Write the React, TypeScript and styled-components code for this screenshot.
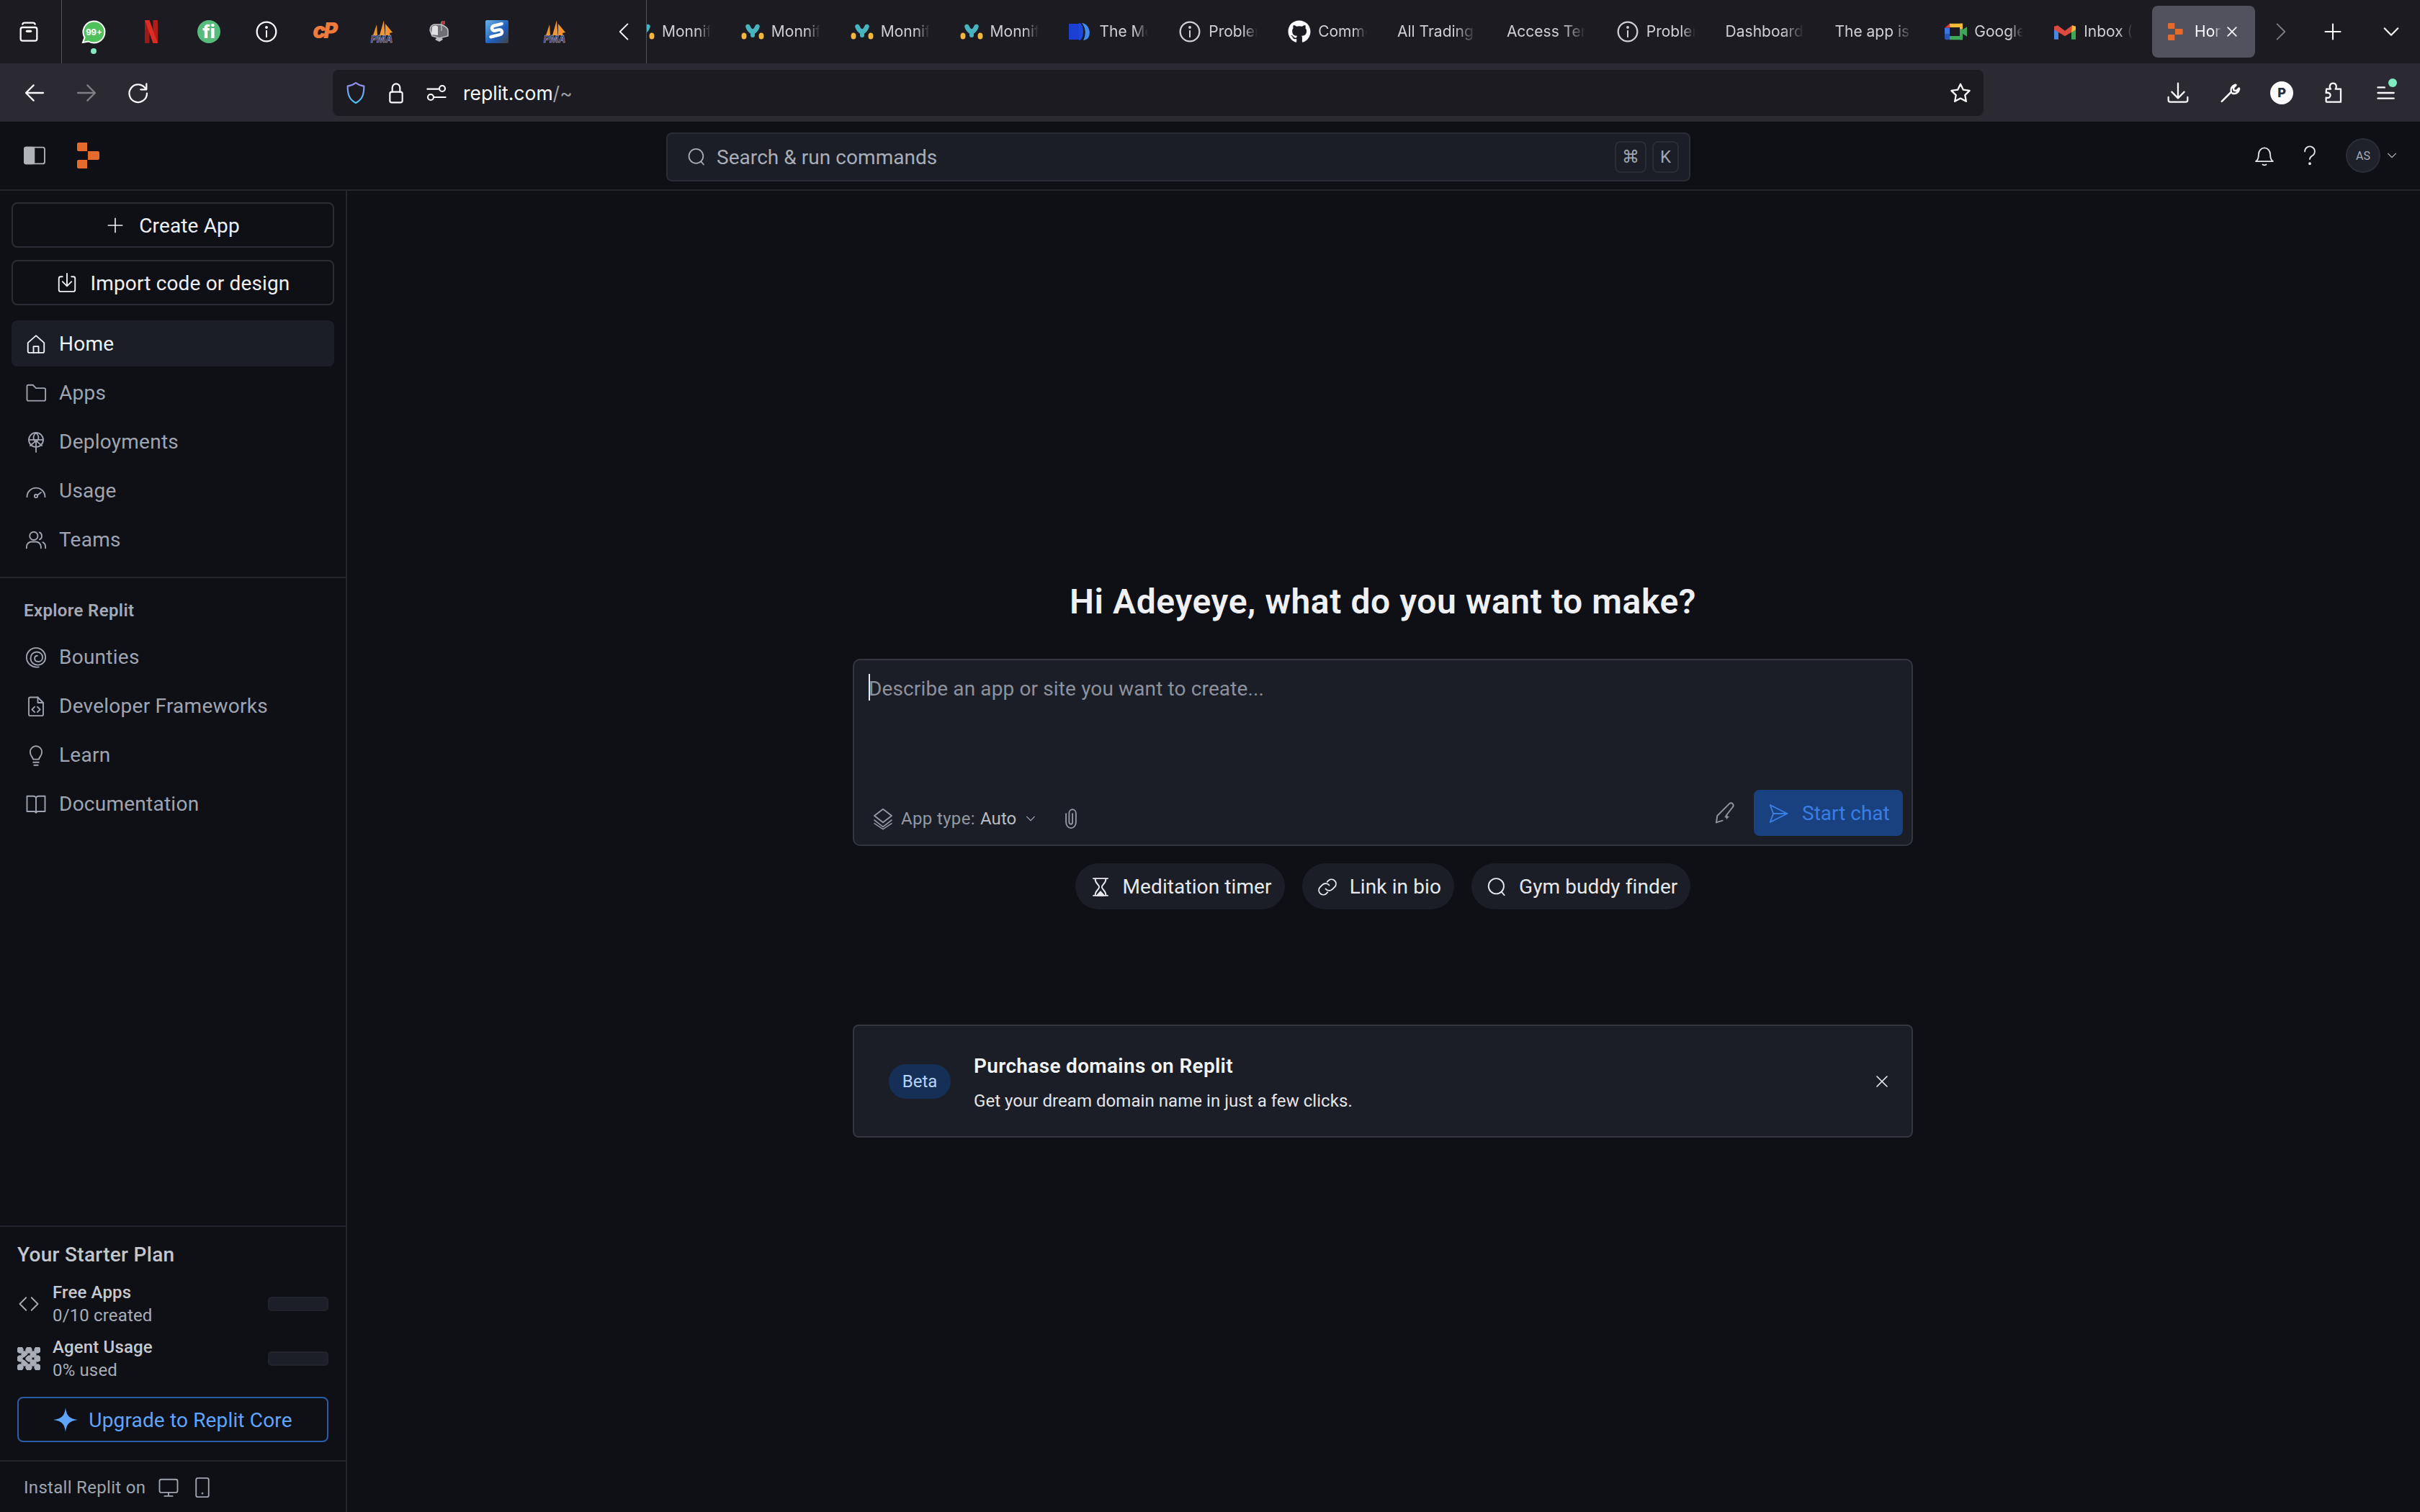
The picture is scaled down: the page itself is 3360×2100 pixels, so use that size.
import React from "react";
import styled, { createGlobalStyle } from "styled-components";
import { FaGithub } from "react-icons/fa";

const Global = createGlobalStyle`
  html, body { margin: 0; padding: 0; background: #0e1016; }
  * { box-sizing: border-box; }
  body { font-family: Roboto, "Noto Sans", sans-serif; color: #f5f7fa; }
`;

const Page = styled.div`
  width: 3360px; height: 2100px; display: flex; flex-direction: column; overflow: hidden; background: #0e1016;
`;

const Svg = styled.svg<{ $s: number; $c?: string; $w?: number }>`
  width: ${p => p.$s}px; height: ${p => p.$s}px; flex: none; fill: none;
  stroke: ${p => p.$c || "currentColor"}; stroke-width: ${p => p.$w || 1.5};
  stroke-linecap: round; stroke-linejoin: round; display: block;
`;

type IP = { s?: number; c?: string; w?: number };
const mk = (body: React.ReactNode, vb = "0 0 24 24") => ({ s = 30, c, w }: IP) => (
  <Svg $s={s} $c={c} $w={w} viewBox={vb}>{body}</Svg>
);

/* ---------- browser chrome ---------- */
const TabBar = styled.div`
  height: 88px; flex: none; display: flex; align-items: center; background: #1c1b22; color: #fbfbfe;
`;
const TabsButton = styled.div`
  width: 86px; height: 88px; flex: none; display: flex; align-items: center; justify-content: center;
  padding-right: 6px; border-right: 1px solid #52525e;
`;
const PinnedRow = styled.div`
  display: flex; padding-left: 4px; width: 724px; flex: none;
`;
const Pinned = styled.div`
  position: relative; width: 80px; height: 88px; flex: none; display: flex; align-items: center; justify-content: center;
`;
const AttentionDot = styled.span`
  position: absolute; left: 36px; top: 67px; width: 8px; height: 8px; border-radius: 50%; background: #80ebc0;
`;
const ScrollBack = styled.div`
  width: 88px; height: 88px; flex: none; display: flex; align-items: center; justify-content: center;
  padding-left: 26px; border-right: 1px solid #52525e; color: #fbfbfe;
`;
const ScrollForward = styled.div`
  width: 56px; height: 88px; flex: none; display: flex; align-items: center; justify-content: center; color: #7c7c85;
`;
const TabStrip = styled.div`
  width: 2240px; flex: none; overflow: hidden; height: 88px;
`;
const TabTrack = styled.div`
  display: flex; margin-left: -42px; height: 88px; align-items: center;
`;
const Tab = styled.div<{ $active?: boolean }>`
  flex: none; height: 72px; display: flex; align-items: center; border-radius: 8px;
  gap: ${p => (p.$active ? "15px" : "10px")};
  width: ${p => (p.$active ? "143px" : "151.86px")};
  padding: ${p => (p.$active ? "0 22px 0 20px" : "0 21px")};
  margin: ${p => (p.$active ? "0 3px 0 6px" : "0")};
  background: ${p => (p.$active ? "#52525e" : "transparent")};
  color: ${p => (p.$active ? "#fbfbfe" : "#cfcfd4")};
`;
const TabLabel = styled.span`
  flex: 1; min-width: 0; overflow: hidden; white-space: nowrap; font-family: Inter, sans-serif;
  font-size: 21px; line-height: 30px;
  -webkit-mask-image: linear-gradient(to right, #000 72%, transparent 100%);
  mask-image: linear-gradient(to right, #000 72%, transparent 100%);
`;
const TabRight = styled.div`
  display: flex; align-items: center; flex: none;
`;
const TabTool = styled.div<{ $w: number }>`
  width: ${p => p.$w}px; height: 72px; display: flex; align-items: center; justify-content: center; color: #fbfbfe;
`;

const NavBar = styled.div`
  height: 81px; flex: none; display: flex; align-items: center; padding: 0 12px; background: #2b2a33; color: #fbfbfe;
`;
const NavBtn = styled.div<{ $dim?: boolean }>`
  position: relative; width: 72px; height: 64px; flex: none; display: flex; align-items: center; justify-content: center;
  color: ${p => (p.$dim ? "#807f85" : "#fbfbfe")};
`;
const UrlBar = styled.div`
  width: 2292px; height: 64px; margin-left: 234px; flex: none; display: flex; align-items: center;
  background: #1c1b22; border-radius: 8px; padding: 0 16px;
`;
const UrlIcons = styled.div`
  display: flex; align-items: center; gap: 24px; color: #fbfbfe;
`;
const UrlText = styled.span`
  margin-left: 21px; font-family: Inter, sans-serif; font-size: 26.5px; color: #fbfbfe;
`;
const UrlRest = styled.span`
  color: #9d9da3;
`;
const UrlEnd = styled.div`
  margin-left: auto; display: flex; align-items: center;
`;
const NavRight = styled.div`
  margin-left: auto; display: flex; align-items: center;
`;
const UpdateDot = styled.span`
  position: absolute; right: 20px; top: 12px; width: 12px; height: 12px; border-radius: 50%; background: #80ebc0;
`;
const ProfileBadge = styled.span`
  width: 32px; height: 32px; border-radius: 50%; background: #fbfbfe; color: #2b2a33;
  display: flex; align-items: center; justify-content: center; font-family: Inter, sans-serif; font-weight: 800; font-size: 18px;
`;

/* ---------- app header ---------- */
const AppHeader = styled.header`
  height: 96px; flex: none; display: flex; align-items: center; border-bottom: 2px solid #23262e; background: #0e1016;
`;
const HeaderLeft = styled.div`
  width: 925px; flex: none; display: flex; align-items: center; gap: 40px; padding-left: 32px; color: #b0b3ba;
`;
const SearchBox = styled.div`
  width: 1422px; height: 68px; margin-top: 4px; flex: none; display: flex; align-items: center; background: #1b1e26;
  border: 2px solid #2a2d36; border-radius: 8px; padding: 0 14px 0 26px; color: #a9adb6;
`;
const SearchText = styled.span`
  margin-left: 14px; padding-top: 1px; font-size: 28px; letter-spacing: .05px; flex: 1;
`;
const Kbd = styled.span<{ $mono?: boolean }>`
  height: 44px; min-width: 34px; padding: 0 ${p => (p.$mono ? "8px" : "9px")}; margin-left: 8px; border: 2px solid #2a2d36; border-radius: 8px;
  display: flex; align-items: center; justify-content: center; font-size: 24px; color: #a2a6af;
  font-family: Roboto, "DejaVu Sans", sans-serif;
`;
const HeaderRight = styled.div`
  flex: 1; display: flex; align-items: center; justify-content: flex-end; padding-right: 31px; color: #e2e4e8;
`;
const HeadIcon = styled.div<{ $mr: number }>`
  display: flex; margin-right: ${p => p.$mr}px;
`;
const Avatar = styled.div`
  width: 48px; height: 48px; border-radius: 50%; background: #1f222a; border: 2px solid #2a2d36;
  display: flex; align-items: center; justify-content: center; font-size: 16px; color: #a9adb6; margin-right: 8px;
`;

/* ---------- layout ---------- */
const Body = styled.div`
  flex: 1; min-height: 0; display: flex;
`;
const Sidebar = styled.aside`
  width: 482px; flex: none; display: flex; flex-direction: column; border-right: 2px solid #23262e;
`;
const TopGroup = styled.div`
  padding: 16px 16px 20px; display: flex; flex-direction: column; border-bottom: 2px solid #23262e;
`;
const OutlineBtn = styled.div<{ $gap?: number }>`
  height: 63px; display: flex; align-items: center; justify-content: center; gap: ${p => p.$gap || 20}px;
  border: 2px solid #2a2d36; border-radius: 8px; font-size: 28px; letter-spacing: .15px; color: #eef0f3; margin-bottom: 17px;
`;
const OutlineLabel = styled.span`
  padding-top: 2px;
`;
const NavList = styled.nav`
  display: flex; flex-direction: column; gap: 4px; margin-top: 4px;
`;
const NavItem = styled.div<{ $active?: boolean }>`
  height: 64px; display: flex; align-items: center; gap: 17px; padding: 1px 19px 0; border-radius: 8px; font-size: 28px; letter-spacing: .25px;
  background: ${p => (p.$active ? "#1b1e26" : "transparent")};
  color: ${p => (p.$active ? "#f0f2f5" : "#9fa4b0")};
`;
const ExploreGroup = styled.div`
  padding: 30px 16px 0; display: flex; flex-direction: column;
`;
const SectionLabel = styled.div`
  font-size: 24px; font-weight: 600; line-height: 30px; letter-spacing: .35px; padding-left: 17px; margin-bottom: 13px; color: #a4a9b4;
`;
const PlanGroup = styled.div`
  margin-top: auto; border-top: 2px solid #23262e; padding: 22px 24px 25px; display: flex; flex-direction: column;
`;
const PlanTitle = styled.div`
  font-size: 28px; font-weight: 500; line-height: 34px; letter-spacing: .3px; color: #c3c6cd; margin-bottom: 19px;
`;
const StatRow = styled.div`
  display: flex; align-items: center; height: 64px; margin-bottom: 12px; color: #a9adb6;
`;
const StatIcon = styled.div`
  width: 32px; flex: none; display: flex; justify-content: center; margin-right: 17px;
`;
const StatText = styled.div`
  flex: 1; font-size: 24px; line-height: 32px; letter-spacing: .15px;
`;
const StatName = styled.div`
  font-weight: 500; color: #c6c9cf;
`;
const StatBar = styled.div`
  width: 84px; height: 20px; border-radius: 5px; background: #1c1f27; border: 2px solid #20232b;
`;
const UpgradeBtn = styled.div`
  height: 63px; margin-top: 9px; display: flex; align-items: center; justify-content: center; gap: 15px;
  border: 2px solid #2a5da6; border-radius: 8px; padding-top: 1px; font-size: 28px; letter-spacing: .15px; color: #5fa5f9;
`;
const InstallRow = styled.div`
  height: 72px; flex: none; border-top: 2px solid #23262e; display: flex; align-items: center; padding: 1px 0 0 33px;
  font-size: 24px; letter-spacing: .3px; color: #9fa4b0;
`;
const Spaced = styled.span<{ $ml: number }>`
  display: flex; margin-left: ${p => p.$ml}px;
`;

const Main = styled.main`
  flex: 1; min-width: 0; display: flex; flex-direction: column; align-items: center; padding-right: 2px;
`;
const Heading = styled.h1`
  margin: 541px 0 49px; font-size: 48px; line-height: 60px; font-weight: 600; letter-spacing: .58px; color: #eef0f4;
`;
const Composer = styled.div`
  width: 1472px; height: 260px; flex: none; display: flex; flex-direction: column; justify-content: space-between;
  background: #1b1e26; border: 2px solid #33363f; border-radius: 10px; padding: 19px 12px 12px 20px;
`;
const PromptLine = styled.div`
  display: flex; align-items: center; height: 37px; font-size: 28px; letter-spacing: .13px; color: #8d919d;
`;
const PromptText = styled.span`
  padding-top: 3px;
`;
const Caret = styled.span`
  width: 2px; height: 37px; background: #e8eaed; flex: none; margin-right: -2px;
`;
const ComposerFoot = styled.div`
  display: flex; align-items: flex-end; justify-content: space-between;
`;
const FootLeft = styled.div`
  height: 48px; display: flex; align-items: center; padding-left: 4px; font-size: 24px; letter-spacing: .35px; color: #9298a4;
`;
const AutoValue = styled.span`
  margin-left: 7px; letter-spacing: .1px; color: #b9bcc4;
`;
const FootRight = styled.div`
  display: flex; align-items: center; gap: 24px; color: #8f939c;
`;
const StartBtn = styled.div`
  width: 207px; height: 64px; display: flex; align-items: center; gap: 18px; padding: 1px 0 0 19px; border-radius: 8px;
  background: #19417f; color: #3a7de3; font-size: 28px;
`;
const ChipRow = styled.div`
  display: flex; gap: 24px; margin-top: 24px;
`;
const Chip = styled.div`
  height: 64px; display: flex; align-items: center; gap: 16px; padding: 1px 18px 0 20px; border-radius: 32px;
  background: #1b1e26; color: #e6e8ec; font-size: 28px; letter-spacing: .1px;
`;
const Banner = styled.div`
  width: 1472px; height: 157px; margin-top: 160px; flex: none; display: flex; align-items: center;
  background: #1b1e26; border: 2px solid #33363f; border-radius: 8px; padding: 0 29px 0 48px;
`;
const BetaPill = styled.span`
  width: 86px; height: 48px; border-radius: 24px; background: #152f57; color: #b8d4f8;
  display: flex; align-items: center; justify-content: center; font-size: 24px; flex: none;
`;
const BannerText = styled.div`
  margin-left: 32px; margin-top: 6px; display: flex; flex-direction: column; gap: 12px;
`;
const BannerTitle = styled.div`
  font-size: 28px; line-height: 36px; font-weight: 600; letter-spacing: .33px; color: #f2f4f7;
`;
const BannerSub = styled.div`
  font-size: 24px; line-height: 36px; letter-spacing: .05px; color: #e3e5e9;
`;
const BannerClose = styled.div`
  margin-left: auto; color: #eef0f3; display: flex;
`;

/* ---------- icons ---------- */
const TabsIcon = mk(<><rect x="3.5" y="7.5" width="17" height="14" rx="2" /><path d="M5.5 4.2c.3-1 .9-1.5 2-1.5h9c1.1 0 1.7.5 2 1.5" /><path d="M10 11.5h4" strokeWidth="2.4" /></>);
const ChevronL = mk(<path d="M15.5 3.5 7 12l8.5 8.5" />);
const ChevronR = mk(<path d="M8.5 3.5 17 12l-8.5 8.5" />);
const PlusI = mk(<path d="M12 3v18M3 12h18" />);
const ChevronD = mk(<path d="M4 8l8 8 8-8" />);
const CloseI = mk(<path d="M5 5l14 14M19 5 5 19" />);
const BackI = mk(<path d="M21 12H3.5M11 4l-8 8 8 8" />);
const FwdI = mk(<path d="M3 12h17.5M13 4l8 8-8 8" />);
const ReloadI = mk(<><path d="M19.5 7.5A9.2 9.2 0 1 0 21 12.5" /><path d="M20.5 2.5v6h-6" /></>);
const LockI = mk(<><rect x="5.5" y="11" width="13" height="11" rx="2" /><path d="M8 11V6.5a4 4 0 0 1 8 0V11" /></>);
const TuneI = mk(<><path d="M2.500 8h11.500M10 16.500h11.500" /><circle cx="18" cy="7.500" r="3" /><circle cx="6" cy="16.500" r="3" /></>);
const StarI = mk(<path d="m12 2.8 2.9 6 6.6.9-4.8 4.6 1.2 6.6-5.9-3.2-5.9 3.2 1.2-6.6L2.5 9.7l6.6-.9z" />);
const DownloadI = mk(<><path d="M12 2v15M5.5 11l6.5 6.5 6.5-6.5" /><path d="M2 16.5v3a2 2 0 0 0 2 2h16a2 2 0 0 0 2-2v-3" /></>);
const WrenchI = mk(<path d="m3 21.5 10.5-10.5c-1-3.3.6-7 4.5-8l.9.3-3 3.2.6 2.7 2.7.6 3-3 .3 1c-.8 4-4.4 5.8-7.8 4.6" strokeWidth="2" />);
const PuzzleI = mk(<path d="M4.5 8h4.5c-1.8-2-1-6 2.5-6s4.2 4 2.5 6h5.5v13.5H5a.8.8 0 0 1-.8-.8V17c3 .8 4.5-.8 4.5-2.5S7.2 11.300 4.200 12z" />);
const MenuI = mk(<path d="M3 5.500h8M3 12h19M3 18.500h19" strokeWidth="2" />);
const ShieldGrad = ({ s = 32 }: { s?: number }) => (
  <Svg $s={s} viewBox="0 0 24 24" $c="url(#shieldG)" $w={1.6}>
    <defs>
      <linearGradient id="shieldG" x1="0" y1="0" x2="0" y2="1">
        <stop offset="0" stopColor="#9a8cf5" /><stop offset="1" stopColor="#4cc4f5" />
      </linearGradient>
    </defs>
    <path d="M12 1.500c2.500 2 5 3 8.500 3.500 0 7.500-1 13.500-8.500 17.500C4.500 18.500 3.500 12.500 3.500 5 7 4.500 9.500 3.500 12 1.500z" />
  </Svg>
);
const InfoI = mk(<><circle cx="12" cy="12" r="10" strokeWidth="1.7" /><path d="M12 11v6.500" strokeWidth="1.500" /><circle cx="12" cy="7.500" r=".7" fill="currentColor" /></>);
const PanelI = ({ s = 32 }: { s?: number }) => (
  <Svg $s={s} viewBox="0 0 24 24" $w={1.4}>
    <rect x="1.500" y="3.500" width="21" height="17" rx="2" />
    <rect x="1.500" y="3.500" width="10" height="17" rx="1.500" fill="currentColor" />
  </Svg>
);
const SearchI = mk(<><circle cx="11.500" cy="11" r="8.500" /><path d="M17.500 17.500 20.500 21" /></>);
const BellI = mk(<><path d="M2.500 18.500c2.500-1.500 3-4 3-7.500a6.500 7.500 0 0 1 13 0c0 3.500.5 6 3 7.500z" /><path d="M10 22c1.200.8 2.800.8 4 0" /></>);
const HelpI = mk(<><path d="M6.500 7.500a5.500 5.500 0 1 1 8.300 4.700c-1.800 1.100-2.800 2-2.800 3.800" /><circle cx="12" cy="21" r=".8" fill="currentColor" /></>);
const ImportI = mk(<><path d="M7 5H5a2 2 0 0 0-2 2v12.500a2 2 0 0 0 2 2h14a2 2 0 0 0 2-2V7a2 2 0 0 0-2-2h-2" /><path d="M12 1.500v13.500M7 10.500l5 5 5-5" /></>);
const HomeI = mk(<><path d="M3 10.500 12 2.500l9 8V20a1.500 1.500 0 0 1-1.500 1.500h-15A1.500 1.500 0 0 1 3 20z" /><path d="M9.200 21.500V14.500h5.600v7" /></>);
const FolderI = mk(<path d="M2 4.500a1.500 1.500 0 0 1 1.500-1.500h5l3.500 3.500h9A1.500 1.500 0 0 1 22.500 8v11a1.500 1.500 0 0 1-1.500 1.500H3.500A1.500 1.500 0 0 1 2 19z" />);
const DeployI = mk(<><circle cx="12" cy="9.500" r="8" /><path d="M4 9.500h16M12 1.500c-3.500 3-3.500 7 -1.500 9M12 1.500c3.500 3 3.500 7 1.500 9" /><path d="M12 23V11M5.500 16l6.500-5.500 6.500 5.500" /></>);
const UsageI = mk(<><path d="M2 18.500a10 10 0 0 1 20 0" /><circle cx="12" cy="17.500" r="1.700" /><path d="m13.500 16.500 4-3" /></>);
const TeamsI = mk(<><circle cx="9.500" cy="7.500" r="4.500" /><path d="M1.500 21v-1.500a5.500 5.500 0 0 1 5.500-5.500h5a5.500 5.500 0 0 1 5.500 5.500V21" /><path d="M16 3.500a4.500 4.500 0 0 1 0 8M19.500 14.500c1.800.9 3 2.700 3 5V21" /></>);
const SpiralI = mk(<path d="M15 22.700C7.500 24 1.500 18.500 1.500 12a10.500 10.500 0 0 1 21 0c0 5-3.800 8.500-8.500 8.500-4.500 0-8-3.200-8-7.500s3-7 6.800-7 6.500 2.500 6.500 5.800-2.300 5-4.800 5-4-1.600-4-3.600 1.400-3 3-3" />);
const FileCodeI = mk(<><path d="M4 3.500A1.500 1.500 0 0 1 5.500 2H14l6 6v13a1.500 1.500 0 0 1-1.500 1.500h-13A1.500 1.500 0 0 1 4 21z" /><path d="M14 2v6h6M10.500 12.500 7.500 15.500l3 3M13.500 12.500l3 3-3 3" /></>);
const BulbI = mk(<path d="M8.800 16.500c-.3-2.600-3.300-3.700-3.300-8.200a6.500 6.500 0 0 1 13 0c0 4.500-3 5.600-3.300 8.200zM9 19.800h6M9.800 23h4.400" />);
const BookI = mk(<path d="M2 3h7c1.500 0 3 1 3 2.500C12 4 13.500 3 15 3h7v17h-8.500L12 21.500 10.500 20H2zM12 5.500v16" />);
const CodeI = mk(<path d="M9 5 2 12l7 7M15 5l7 7-7 7" />);
const Sparkle = ({ s = 34, c = "#5fa5f9" }: { s?: number; c?: string }) => (
  <Svg $s={s} viewBox="0 0 24 24" $c="none"><path fill={c} d="M12 0c.9 7.600 3.400 10.900 12 12-8.600 1.100-11.100 4.400-12 12-.9-7.600-3.400-10.900-12-12C8.600 10.900 11.100 7.600 12 0z" /></Svg>
);
const AgentI = ({ s = 32 }: { s?: number }) => (
  <Svg $s={s} viewBox="0 0 32 32" $c="#a9adb6" $w={0}>
    <g fill="#a9adb6">
      {[4, 16, 28].map(x => [4, 16, 28].map(y => <circle key={`${x}${y}`} cx={x} cy={y} r="4" />))}
      <circle cx="10" cy="10" r="4" /><circle cx="22" cy="10" r="4" /><circle cx="10" cy="22" r="4" /><circle cx="22" cy="22" r="4" />
    </g>
    <path d="M8 16c5-2 5-6 9-6M8 16c5 2 5 6 9 6" stroke="#0e1016" strokeWidth="1.500" fill="none" />
  </Svg>
);
const MonitorI = mk(<><rect x="2" y="3" width="20" height="14.500" rx="2" /><path d="M12 17.500V21.500M7.500 21.500h9" /></>);
const PhoneI = mk(<><rect x="5" y="1.500" width="14" height="21" rx="2" /><circle cx="12" cy="18.500" r=".4" fill="currentColor" /></>);
const LayersI = mk(<><path d="m12 2 9 7-9 7-9-7z" /><path d="m3 13.500 9 7 9-7M3 17l9 6 9-6" strokeWidth="1.200" /></>);
const ClipI = mk(<path d="M6.500 6.500v9.500a5.500 6.500 0 0 0 11 0V6a3.800 4.200 0 0 0-7.600 0v10a1.900 2.200 0 0 0 3.800 0V6.500" />);
const PenI = mk(<><path d="M3 22 4 15 16.500 2.500c1-1 2.500-1 3.500 0s1 2.500 0 3.500l-7 9" /><path d="M3 22l6.500-2" /><path d="M14 13c.3 2.200 1 3 3 3.300-2 .3-2.700 1-3 3.200-.3-2.200-1-2.900-3-3.200 2-.3 2.700-1.100 3-3.300z" fill="currentColor" stroke="none" /></>);
const SendI = mk(<path d="M3 2.500 22 12 3 21.500 6.500 12zM6.500 12H22" />);
const HourglassI = mk(<><path d="M4 2.500h16M4 21.500h16M6 2.500c0 6 4.500 6.500 4.500 9.500S6 15.500 6 21.500M18 2.500c0 6-4.500 6.500-4.500 9.500s4.500 3.500 4.500 9.500" /><path d="M8 21.500l4-4.500 4 4.500z" fill="currentColor" /></>);
const LinkI = mk(<><path d="M10 14a5 5 0 0 0 7.500.5l3-3a5 5 0 0 0-7-7l-1.800 1.800" /><path d="M14 10a5 5 0 0 0-7.500-.5l-3 3a5 5 0 0 0 7 7l1.800-1.800" /></>);

/* ---------- favicons ---------- */
const Fav = styled.svg`
  width: 32px; height: 32px; flex: none; display: block; overflow: visible;
`;
const WhatsApp = () => (
  <Fav viewBox="0 0 32 32">
    <path d="M1 31l2.500-7A15 15 0 1 1 9 29.500z" fill="#4fc15c" stroke="#fff" strokeWidth="2" />
    <text x="16.500" y="20.500" textAnchor="middle" fontSize="11.500" fontWeight="700" fill="#fff" fontFamily="Inter, sans-serif">99+</text>
  </Fav>
);
const Netflix = () => (
  <Fav viewBox="0 0 32 32">
    <path d="M7 0h6.500v32L7 32z" fill="#9c1a17" /><path d="M18.500 0H25v32h-6.500z" fill="#b01e1a" />
    <path d="M7 0h6.500L25 32h-6.500z" fill="#dc2c24" />
  </Fav>
);
const Fiverr = () => (
  <Fav viewBox="0 0 32 32">
    <circle cx="16" cy="16" r="16" fill="#56bb7c" />
    <text x="16" y="25" textAnchor="middle" fontSize="25" fontWeight="800" fill="#fff" fontFamily="Inter, sans-serif">fi</text>
  </Fav>
);
const Cpanel = () => (
  <Fav viewBox="0 0 32 32">
    <text x="16" y="25" textAnchor="middle" fontSize="30" fontWeight="900" fontStyle="italic" letterSpacing="-3" fill="#ee7a3b" fontFamily="Inter, sans-serif">cP</text>
  </Fav>
);
const Pma = () => (
  <Fav viewBox="0 0 32 32">
    <path d="M4 21 9 6l1 15zM13 21 19 0l1.500 21zM21 21V5l10 12-4 1 .5 3z" fill="#f0952f" />
    <text x="16" y="31" textAnchor="middle" fontSize="13" fontWeight="800" fontStyle="italic" fill="#3e3d6e" stroke="#c7c8dc" strokeWidth=".4" fontFamily="Inter, sans-serif">PMA</text>
  </Fav>
);
const Mailbox = () => (
  <Fav viewBox="0 0 32 32">
    <path d="M3 14c0-5 3-8 7-8h9c4 2 9 5 9 8v8l-12 3-10-3z" fill="#6f6f74" stroke="#c6c6c8" strokeWidth="1.500" />
    <path d="M6 9c3-2 6-2 8 0v12l-9-1z" fill="#e0e0e2" />
    <path d="M13 24h6l2 3-5 3-6-3z" fill="#bdbdc0" /><path d="M19 15V2" stroke="#d8d8da" strokeWidth="1" /><path d="M19 1h5v5h-5z" fill="#b23c3c" />
  </Fav>
);
const Spike = () => (
  <Fav viewBox="0 0 32 32">
    <defs><linearGradient id="spikeG" x1="0" y1="0" x2="1" y2="1"><stop offset="0" stopColor="#6bb3e6" /><stop offset=".6" stopColor="#1c5cb8" /><stop offset="1" stopColor="#444" /></linearGradient></defs>
    <rect width="32" height="32" rx="2" fill="url(#spikeG)" />
    <path d="M25 7H14c-5 0-5 7 0 7h5c5 0 5 7 0 7H6" fill="none" stroke="#fff" strokeWidth="4.500" strokeLinecap="round" transform="rotate(-14 16 16)" />
  </Fav>
);
const Monnify = () => (
  <Fav viewBox="0 0 32 32">
    <path d="M9.500 9c1 4 3.500 6 6.500 8 3-2 5.500-4 6.500-8" fill="none" stroke="#47b3bf" strokeWidth="6.500" strokeLinecap="round" />
    <path d="M16 15v6" stroke="#47b3bf" strokeWidth="6" strokeLinecap="round" />
    <ellipse cx="4" cy="22" rx="3.500" ry="4.500" fill="#f3b73f" /><ellipse cx="28" cy="22" rx="3.500" ry="4.500" fill="#f3b73f" />
  </Fav>
);
const Mono = () => (
  <Fav viewBox="0 0 32 32">
    <path d="M0 5h14v22H0z" fill="#1b3fd1" /><path d="M14 4c8 0 8 24 0 24z" fill="#1d46dc" />
    <path d="M18 4c12 .5 16 23 2 24 4-7 4-17-2-24z" fill="#3f8bf5" />
  </Fav>
);
const Meet = () => (
  <Fav viewBox="0 0 32 32">
    <g transform="translate(0 4) scale(1 .75)">
      <path d="M8 1h18v7H8z" fill="#f4bb37" /><path d="M8 1 1 9h7z" fill="#d93a2e" />
      <path d="M1 9h7v12H1z" fill="#3a74e0" /><path d="M1 21h7v10H4a3 3 0 0 1-3-3z" fill="#2a56b8" />
      <path d="M8 24h18v7H8z" fill="#3fa75a" /><path d="M22 1h4v30h-4z" fill="#3fa75a" /><path d="M22 1h4v10h-4z" fill="#f4bb37" />
      <path d="M24 14l8-7v18l-8-7z" fill="#3fa75a" />
    </g>
  </Fav>
);
const Gmail = () => (
  <Fav viewBox="0 0 32 32">
    <g transform="translate(0 5) scale(1 .75)">
      <path d="M1 5v24h6V13z" fill="#4a86e8" /><path d="M31 5v24h-6V13z" fill="#3fa75a" />
      <path d="M1 5v6l15 12 15-12V5l-5-2-10 10L6 3z" fill="#dd4b3e" /><path d="M26 3l5 2v6l-6 5z" fill="#f4bb37" />
    </g>
  </Fav>
);
const ReplitMark = ({ s = 32 }: { s?: number }) => (
  <Svg $s={s} viewBox="0 0 32 36" $c="none">
    <path fill="#e56b2d" d="M1 2a2 2 0 0 1 2-2h12v12H3a2 2 0 0 1-2-2zM16 12h14a2 2 0 0 1 2 2v8a2 2 0 0 1-2 2H16zM3 24h12v12H3a2 2 0 0 1-2-2v-8a2 2 0 0 1 2-2z" />
  </Svg>
);

const pinned: React.ReactNode[] = [
  <><WhatsApp /><AttentionDot /></>, <Netflix />, <Fiverr />, <InfoI s={32} />, <Cpanel />, <Pma />, <Mailbox />, <Spike />, <Pma />,
];

const tabs: { icon?: React.ReactNode; label: string }[] = [
  { icon: <Monnify />, label: "Monnify" },
  { icon: <Monnify />, label: "Monnify" },
  { icon: <Monnify />, label: "Monnify" },
  { icon: <Monnify />, label: "Monnify" },
  { icon: <Mono />, label: "The Mono" },
  { icon: <InfoI s={32} />, label: "Problem" },
  { icon: <FaGithub size={32} color="#fbfbfe" />, label: "Comments" },
  { label: "All Trading Pairs" },
  { label: "Access Terminal" },
  { icon: <InfoI s={32} />, label: "Problem" },
  { label: "Dashboard" },
  { label: "The app is running" },
  { icon: <Meet />, label: "Google Meet" },
  { icon: <Gmail />, label: "Inbox (42)" },
];

const primary = [
  { icon: <HomeI />, label: "Home", active: true },
  { icon: <FolderI />, label: "Apps" },
  { icon: <DeployI />, label: "Deployments" },
  { icon: <UsageI />, label: "Usage" },
  { icon: <TeamsI />, label: "Teams" },
];
const explore = [
  { icon: <SpiralI />, label: "Bounties" },
  { icon: <FileCodeI />, label: "Developer Frameworks" },
  { icon: <BulbI />, label: "Learn" },
  { icon: <BookI />, label: "Documentation" },
];

export default function App() {
  return (
    <Page>
      <Global />
      <TabBar>
        <TabsButton><TabsIcon s={32} w={1.7} /></TabsButton>
        <PinnedRow>
          {pinned.map((p, i) => <Pinned key={i}>{p}</Pinned>)}
        </PinnedRow>
        <ScrollBack><ChevronL s={30} /></ScrollBack>
        <TabStrip>
          <TabTrack>
            {tabs.map((t, i) => (
              <Tab key={i}>{t.icon}<TabLabel>{t.label}</TabLabel></Tab>
            ))}
            <Tab $active>
              <ReplitMark s={24} />
              <TabLabel>Home</TabLabel>
              <Spaced $ml={-10}><CloseI s={20} c="#fbfbfe" w={2} /></Spaced>
            </Tab>
          </TabTrack>
        </TabStrip>
        <TabRight>
          <ScrollForward><ChevronR s={30} /></ScrollForward>
          <TabTool $w={90}><PlusI s={28} w={1.8} /></TabTool>
          <TabTool $w={72}><ChevronD s={28} w={1.8} /></TabTool>
        </TabRight>
      </TabBar>

      <NavBar>
        <NavBtn><BackI s={32} w={1.7} /></NavBtn>
        <NavBtn $dim><FwdI s={32} w={1.7} /></NavBtn>
        <NavBtn><ReloadI s={32} w={1.7} /></NavBtn>
        <UrlBar>
          <UrlIcons>
            <ShieldGrad s={32} />
            <LockI s={32} w={1.6} />
            <TuneI s={32} w={1.6} />
          </UrlIcons>
          <UrlText>replit.com<UrlRest>/~</UrlRest></UrlText>
          <UrlEnd><StarI s={32} c="#fbfbfe" w={1.7} /></UrlEnd>
        </UrlBar>
        <NavRight>
          <NavBtn><DownloadI s={32} w={1.7} /></NavBtn>
          <NavBtn><WrenchI s={30} /></NavBtn>
          <NavBtn><ProfileBadge>P</ProfileBadge></NavBtn>
          <NavBtn><PuzzleI s={32} w={1.7} /></NavBtn>
          <NavBtn><MenuI s={28} /><UpdateDot /></NavBtn>
        </NavRight>
      </NavBar>

      <AppHeader>
        <HeaderLeft>
          <PanelI s={32} />
          <ReplitMark s={36} />
        </HeaderLeft>
        <SearchBox>
          <SearchI s={28} />
          <SearchText>Search &amp; run commands</SearchText>
          <Kbd $mono>⌘</Kbd>
          <Kbd>K</Kbd>
        </SearchBox>
        <HeaderRight>
          <HeadIcon $mr={33}><BellI s={30} /></HeadIcon>
          <HeadIcon $mr={35}><HelpI s={30} /></HeadIcon>
          <Avatar>AS</Avatar>
          <ChevronD s={16} c="#9fa4b0" w={2} />
        </HeaderRight>
      </AppHeader>

      <Body>
        <Sidebar>
          <TopGroup>
            <OutlineBtn><PlusI s={26} /><OutlineLabel>Create App</OutlineLabel></OutlineBtn>
            <OutlineBtn $gap={18}><ImportI s={30} /><OutlineLabel>Import code or design</OutlineLabel></OutlineBtn>
            <NavList>
              {primary.map(n => <NavItem key={n.label} $active={n.active}>{n.icon}{n.label}</NavItem>)}
            </NavList>
          </TopGroup>
          <ExploreGroup>
            <SectionLabel>Explore Replit</SectionLabel>
            <NavList>
              {explore.map(n => <NavItem key={n.label}>{n.icon}{n.label}</NavItem>)}
            </NavList>
          </ExploreGroup>
          <PlanGroup>
            <PlanTitle>Your Starter Plan</PlanTitle>
            <StatRow>
              <StatIcon><CodeI s={30} /></StatIcon>
              <StatText><StatName>Free Apps</StatName>0/10 created</StatText>
              <StatBar />
            </StatRow>
            <StatRow>
              <StatIcon><AgentI /></StatIcon>
              <StatText><StatName>Agent Usage</StatName>0% used</StatText>
              <StatBar />
            </StatRow>
            <UpgradeBtn><Sparkle />Upgrade to Replit Core</UpgradeBtn>
          </PlanGroup>
          <InstallRow>
            Install Replit on
            <Spaced $ml={17}><MonitorI s={30} /></Spaced>
            <Spaced $ml={17}><PhoneI s={30} /></Spaced>
          </InstallRow>
        </Sidebar>
        <Main>
          <Heading>Hi Adeyeye, what do you want to make?</Heading>
          <Composer>
            <PromptLine><Caret /><PromptText>Describe an app or site you want to create...</PromptText></PromptLine>
            <ComposerFoot>
              <FootLeft>
                <LayersI s={32} />
                <Spaced $ml={9}>App type:</Spaced>
                <AutoValue>Auto</AutoValue>
                <Spaced $ml={12}><ChevronD s={16} w={2} /></Spaced>
                <Spaced $ml={33}><ClipI s={30} /></Spaced>
              </FootLeft>
              <FootRight>
                <PenI s={32} />
                <StartBtn><SendI s={30} />Start chat</StartBtn>
              </FootRight>
            </ComposerFoot>
          </Composer>
          <ChipRow>
            <Chip><HourglassI s={30} />Meditation timer</Chip>
            <Chip><LinkI s={30} />Link in bio</Chip>
            <Chip><SearchI s={30} />Gym buddy finder</Chip>
          </ChipRow>
          <Banner>
            <BetaPill>Beta</BetaPill>
            <BannerText>
              <BannerTitle>Purchase domains on Replit</BannerTitle>
              <BannerSub>Get your dream domain name in just a few clicks.</BannerSub>
            </BannerText>
            <BannerClose><CloseI s={24} w={1.6} /></BannerClose>
          </Banner>
        </Main>
      </Body>
    </Page>
  );
}
